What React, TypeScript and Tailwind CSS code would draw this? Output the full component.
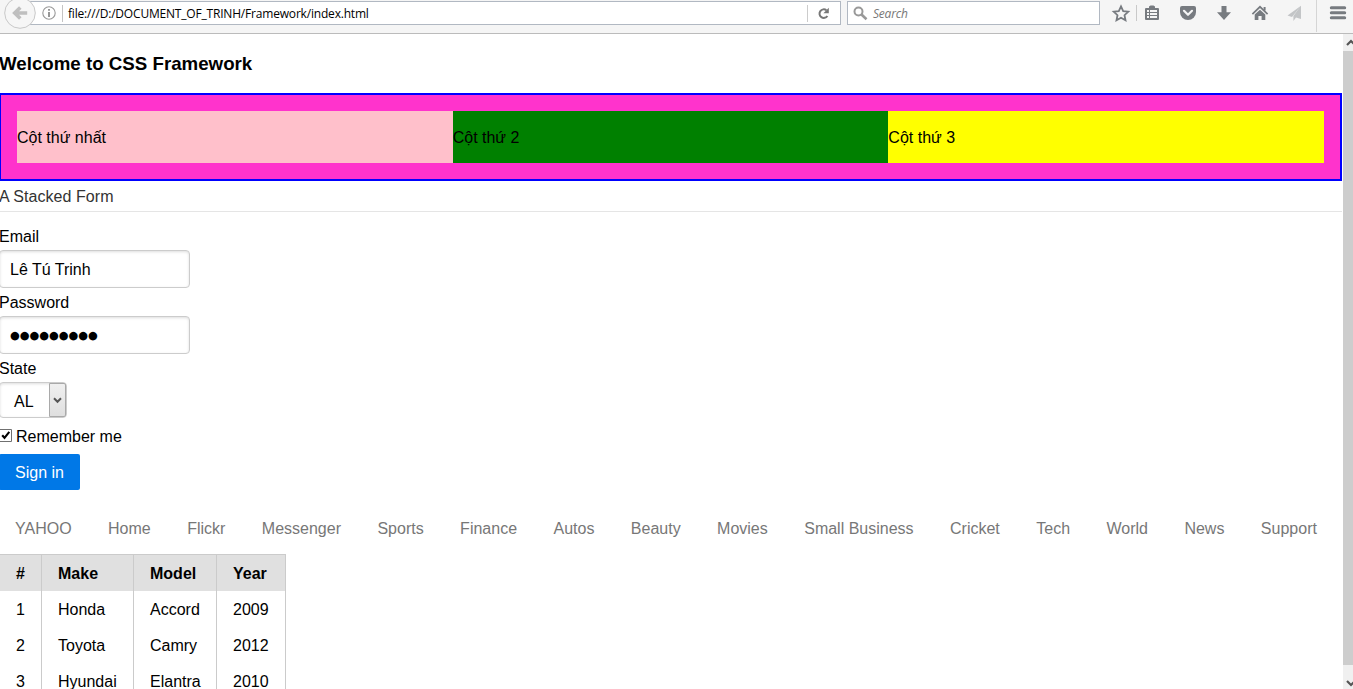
import React from "react";

const navItems = [
  "YAHOO", "Home", "Flickr", "Messenger", "Sports", "Finance", "Autos", "Beauty",
  "Movies", "Small Business", "Cricket", "Tech", "World", "News", "Support",
];

const cars = [
  ["1", "Honda", "Accord", "2009"],
  ["2", "Toyota", "Camry", "2012"],
  ["3", "Hyundai", "Elantra", "2010"],
];

function Toolbar() {
  return (
    <header className="relative flex h-[34px] shrink-0 items-start border-b border-[#bbbbbb] bg-[#f5f5f5] pt-px font-['Open_Sans','Noto_Sans',sans-serif] text-[12px]">
      <svg className="absolute left-[4px] top-[-3px]" width="32" height="32" viewBox="0 0 32 32">
        <circle cx="16" cy="16" r="15.3" fill="#f6f6f6" stroke="#c8c8c8" />
        <path d="M23.2 16H11M16.3 10.5 10.7 16l5.6 5.5" fill="none" stroke="#bfbfbf" strokeWidth="3.6" />
      </svg>
      <div className="ml-[30px] flex h-[24px] w-[811px] items-center border border-[#b1b8c2] bg-white">
        <svg className="ml-[11px] shrink-0" width="14" height="14" viewBox="0 0 14 14">
          <circle cx="7" cy="7" r="6.2" fill="none" stroke="#999" strokeWidth="1.1" />
          <path d="M6.1 3h1.8v1.7H6.1zM6.1 5.9h1.8V11H6.1z" fill="#8c8c8c" />
        </svg>
        <div className="ml-[6px] h-[17px] w-px bg-[#c4c4c4]" />
        <span className="ml-[5px] w-[304px] whitespace-nowrap pt-[2px] text-black tracking-[-0.19px]">file:///D:/DOCUMENT_OF_TRINH/Framework/index.html</span>
        <div className="ml-auto h-[17px] w-px bg-[#cccccc]" />
        <svg className="ml-[9px] mr-[10px] shrink-0" width="13" height="13" viewBox="0 0 13 13">
          <path d="M9.4 3.2A4.3 4.3 0 1 0 10.4 9" fill="none" stroke="#777" strokeWidth="2" />
          <path d="M11.8.8v5.4H6.4z" fill="#777" />
        </svg>
      </div>
      <div className="ml-[6px] flex h-[24px] w-[253px] items-center border border-[#b1b8c2] bg-white">
        <svg className="ml-[5px]" width="15" height="15" viewBox="0 0 15 15">
          <circle cx="5.5" cy="5.5" r="4" fill="none" stroke="#999" strokeWidth="2" />
          <path d="m8.5 8.5 5 4.8" stroke="#999" strokeWidth="2.6" />
        </svg>
        <span className="ml-[5px] pt-[2px] italic text-[#777777] tracking-[-0.2px]">Search</span>
      </div>
      <svg className="absolute left-[1100px] top-0" width="253" height="33" viewBox="1100 0 253 33">
        <path d="m1121 6.4 2.2 4.7 5.1.6-3.8 3.5 1 5.1-4.5-2.6-4.5 2.6 1-5.1-3.8-3.5 5.1-.6z" fill="none" stroke="#777b80" strokeWidth="1.8" />
        <path d="M1136.5 5v16" stroke="#c9c9c9" />
        <path d="M1146 8h3V6.5l1.5-1h3l1.5 1V8h3a1 1 0 0 1 1 1v10a1 1 0 0 1-1 1h-12a1 1 0 0 1-1-1V9a1 1 0 0 1 1-1z" fill="#777b80" />
        <path d="M1147 10h2v2h-2zm3 0h7v2h-7zm-3 3h2v2h-2zm3 0h7v2h-7zm-3 3h2v2h-2zm3 0h7v2h-7z" fill="#f5f5f5" />
        <path d="M1182 6h12a2 2 0 0 1 2 2v4a8 8 0 0 1-16 0V8a2 2 0 0 1 2-2z" fill="#777b80" />
        <path d="m1184 10.8 4 4 4-4" fill="none" stroke="#f5f5f5" strokeWidth="2.2" strokeLinecap="round" strokeLinejoin="round" />
        <path d="M1221.5 6h5v6.2h4.5l-7 7.8-7-7.8h4.5z" fill="#777b80" />
        <path d="m1252.4 14.1 7.6-7.3 7.6 7.3" fill="none" stroke="#777b80" strokeWidth="1.7" />
        <path d="M1263.6 7h2v3.5h-2zM1254.7 14.5l5.3-4.8 5.3 4.8V20h-3.7v-4h-3.2v4h-3.7z" fill="#777b80" />
        <path d="m1301 5.7-13.5 9.8 4.5 1.5zM1301 5.7v13.3l-5-1.5-2.6 3.5v-5z" fill="#c3c5c7" />
        <path d="M1316.5 0v32" stroke="#d5d5d5" />
        <path d="M1331.3 7.7h13.4M1331.3 12.7h13.4M1331.3 17.7h13.4" stroke="#777b80" strokeWidth="3" strokeLinecap="round" />
      </svg>
    </header>
  );
}

function Scrollbar() {
  return (
    <div className="flex w-[10px] shrink-0 flex-col overflow-hidden bg-[#f0f0f0]">
      <svg className="h-[17px] w-[10px] shrink-0" viewBox="0 0 10 17">
        <path d="m4 11 4-4 4 4" fill="none" stroke="#555" strokeWidth="2.2" />
      </svg>
      <div className="h-[614px] shrink-0 bg-[#cdcdcd]" />
      <svg className="h-[24px] w-[10px] shrink-0" viewBox="0 0 10 24">
        <path d="m4 16 4 4 4-4" fill="none" stroke="#555" strokeWidth="2.2" />
      </svg>
    </div>
  );
}

function StackedForm() {
  return (
    <form>
      <div className="h-[31px] border-b border-[#e5e5e5] leading-[31px] text-[#333333] tracking-[0.05px]">A Stacked Form</div>
      <label className="mt-[14px] block h-[24px] leading-[21px]">Email</label>
      <div className="flex h-[38px] w-[191px] items-center rounded-[4px] border border-[#cccccc] bg-white pl-[10px] pt-[2px] shadow-[inset_0_1px_3px_#dddddd]">Lê Tú Trinh</div>
      <label className="block h-[28px] leading-[29px]">Password</label>
      <div className="flex h-[38px] w-[191px] items-center rounded-[4px] border border-[#cccccc] bg-white pl-[10px] pt-[2px] font-['DejaVu_Sans',sans-serif] text-[11.2px] shadow-[inset_0_1px_3px_#dddddd]">●●●●●●●●●</div>
      <label className="block h-[28px] leading-[29px]">State</label>
      <div className="flex h-[36px] w-[68px] items-center rounded-[4px] border border-[#cccccc] bg-white shadow-[inset_0_1px_3px_#dddddd]">
        <span className="ml-[14px] mt-[3px] w-[35px]">AL</span>
        <span className="flex h-[34px] w-[17px] items-center justify-center rounded-r-[2px] border border-[#a9a9a9] bg-linear-to-b from-[#f0f0f0] to-[#dfdfdf]">
          <svg className="shrink-0" width="9" height="7" viewBox="0 0 9 7">
            <path d="M1 1.3 4.5 4.8 8 1.3" fill="none" stroke="#555" strokeWidth="2" />
          </svg>
        </span>
      </div>
      <label className="flex h-[36px] items-center">
        <svg className="mb-px shrink-0" width="13" height="13" viewBox="0 0 13 13">
          <path d="M.5.5h12v12H.5z" fill="#fff" stroke="#707070" />
          <path d="m3.2 6.2 2.3 2.6 4.8-6" fill="none" stroke="#000" strokeWidth="2.1" />
        </svg>
        <span className="ml-[4px] pt-[2px]">Remember me</span>
      </label>
      <button type="button" className="flex h-[36px] w-[81px] items-center justify-center rounded-[2px] bg-[#0078e7] pt-[2px] text-white">Sign in</button>
    </form>
  );
}

export default function App() {
  return (
    <div className="flex h-[689px] w-[1353px] flex-col overflow-hidden bg-white font-['Liberation_Sans',Arial,sans-serif] text-[16px] leading-[20px] text-black">
      <Toolbar />
      <div className="flex min-h-0 flex-1">
        <main className="mr-px min-w-0 flex-1 overflow-hidden">
          <div className="-ml-px">
            <h3 className="h-[59px] pt-[19px] text-[18.72px] font-bold leading-[22px]">Welcome to CSS Framework</h3>
            <div className="flex h-[88px] border-2 border-[#0000ff] bg-[#ff33cc] p-[16px] leading-[54px]">
              <div className="h-[52px] flex-1 bg-[#ffc0cb]">Cột thứ nhất</div>
              <div className="h-[52px] flex-1 bg-[#008000]">Cột thứ 2</div>
              <div className="h-[52px] flex-1 bg-[#ffff00]">Cột thứ 3</div>
            </div>
            <StackedForm />
            <nav className="mt-[20px] flex h-[36px] items-center justify-between pl-[16px] pr-[25px] pt-[2px] text-[#777777]">
              {navItems.map((item) => (
                <a key={item}>{item}</a>
              ))}
            </nav>
            <table className="mt-[8px] w-[287px] table-fixed border-separate border-spacing-0 border-t border-r border-[#cbcbcb] text-left">
              <colgroup>
                <col className="w-[42px]" />
                <col className="w-[92px]" />
                <col className="w-[83px]" />
                <col className="w-[69px]" />
              </colgroup>
              <thead className="bg-[#e0e0e0]">
                <tr className="h-[36px]">
                  <th className="p-0 pt-[2px] pl-[17px]">#</th>
                  <th className="border-l border-[#cbcbcb] p-0 pt-[2px] pl-[16px]">Make</th>
                  <th className="border-l border-[#cbcbcb] p-0 pt-[2px] pl-[16px]">Model</th>
                  <th className="border-l border-[#cbcbcb] p-0 pt-[2px] pl-[16px]">Year</th>
                </tr>
              </thead>
              <tbody>
                {cars.map((row) => (
                  <tr key={row[0]} className="h-[36px]">
                    {row.map((cell, i) => (
                      <td key={i} className={i === 0 ? "p-0 pt-[2px] pl-[17px]" : "border-l border-[#cbcbcb] p-0 pt-[2px] pl-[16px]"}>{cell}</td>
                    ))}
                  </tr>
                ))}
              </tbody>
            </table>
          </div>
        </main>
        <Scrollbar />
      </div>
    </div>
  );
}
